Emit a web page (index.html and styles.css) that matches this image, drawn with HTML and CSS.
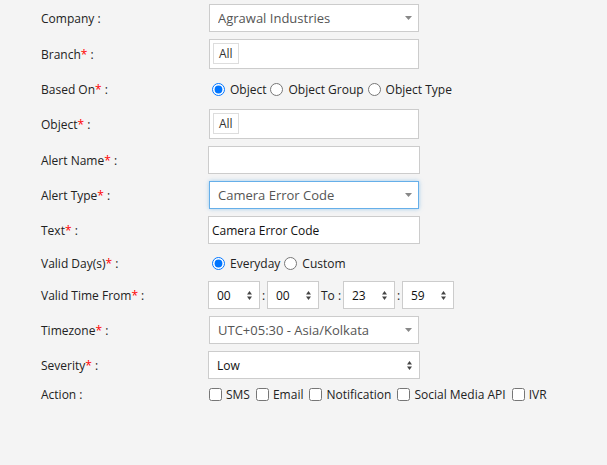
FILE: index.html
```html
<!DOCTYPE html>
<html lang="en">
<head>
    <meta charset="UTF-8">
    <meta name="viewport" content="width=device-width, initial-scale=1.0">
    <title>Add Alert</title>
    <link rel="stylesheet" href="styles.css">
</head>
<body>
    <form class="alert-form">
        <div class="form-row">
            <label class="form-label">Company :</label>
            <div class="select-wrap select-wide">
                <select class="form-select"><option>Agrawal Industries</option></select>
                <svg class="caret" width="7" height="4" viewBox="0 0 7 4"><polygon points="0,0 7,0 3.5,4"/></svg>
            </div>
        </div>

        <div class="form-row">
            <label class="form-label">Branch<span class="req">*</span> :</label>
            <div class="tag-box"><span class="tag">All</span></div>
        </div>

        <div class="form-row row-choice">
            <label class="form-label">Based On<span class="req">*</span> :</label>
            <div class="choice-group">
                <label class="choice"><input type="radio" name="basedOn" checked>Object</label>
                <label class="choice"><input type="radio" name="basedOn">Object Group</label>
                <label class="choice"><input type="radio" name="basedOn">Object Type</label>
            </div>
        </div>

        <div class="form-row">
            <label class="form-label">Object<span class="req">*</span> :</label>
            <div class="tag-box"><span class="tag">All</span></div>
        </div>

        <div class="form-row">
            <label class="form-label">Alert Name<span class="req">*</span> :</label>
            <input type="text" class="form-input">
        </div>

        <div class="form-row">
            <label class="form-label">Alert Type<span class="req">*</span> :</label>
            <div class="select-wrap select-wide is-focus">
                <select class="form-select"><option>Camera Error Code</option></select>
                <svg class="caret" width="7" height="4" viewBox="0 0 7 4"><polygon points="0,0 7,0 3.5,4"/></svg>
            </div>
        </div>

        <div class="form-row">
            <label class="form-label">Text<span class="req">*</span> :</label>
            <input type="text" class="form-input" value="Camera Error Code">
        </div>

        <div class="form-row row-days">
            <label class="form-label">Valid Day(s)<span class="req">*</span> :</label>
            <div class="choice-group">
                <label class="choice"><input type="radio" name="days" checked>Everyday</label>
                <label class="choice"><input type="radio" name="days">Custom</label>
            </div>
        </div>

        <div class="form-row">
            <label class="form-label">Valid Time From<span class="req">*</span> :</label>
            <div class="time-group">
                <div class="select-wrap select-time">
                    <select class="form-select native"><option>00</option></select>
                    <svg class="updown" width="5" height="9" viewBox="0 0 5 9"><polygon points="2.5,0 5,3.5 0,3.5"/><polygon points="0,5.5 5,5.5 2.5,9"/></svg>
                </div>
                <span class="time-sep">:</span>
                <div class="select-wrap select-time">
                    <select class="form-select native"><option>00</option></select>
                    <svg class="updown" width="5" height="9" viewBox="0 0 5 9"><polygon points="2.5,0 5,3.5 0,3.5"/><polygon points="0,5.5 5,5.5 2.5,9"/></svg>
                </div>
                <span class="time-to">To :</span>
                <div class="select-wrap select-time">
                    <select class="form-select native"><option>23</option></select>
                    <svg class="updown" width="5" height="9" viewBox="0 0 5 9"><polygon points="2.5,0 5,3.5 0,3.5"/><polygon points="0,5.5 5,5.5 2.5,9"/></svg>
                </div>
                <span class="time-sep">:</span>
                <div class="select-wrap select-time">
                    <select class="form-select native"><option>59</option></select>
                    <svg class="updown" width="5" height="9" viewBox="0 0 5 9"><polygon points="2.5,0 5,3.5 0,3.5"/><polygon points="0,5.5 5,5.5 2.5,9"/></svg>
                </div>
            </div>
        </div>

        <div class="form-row">
            <label class="form-label">Timezone<span class="req">*</span> :</label>
            <div class="select-wrap select-wide">
                <select class="form-select"><option>UTC+05:30 - Asia/Kolkata</option></select>
                <svg class="caret" width="7" height="4" viewBox="0 0 7 4"><polygon points="0,0 7,0 3.5,4"/></svg>
            </div>
        </div>

        <div class="form-row">
            <label class="form-label">Severity<span class="req">*</span> :</label>
            <div class="select-wrap select-severity">
                <select class="form-select native"><option>Low</option></select>
                <svg class="updown" width="5" height="9" viewBox="0 0 5 9"><polygon points="2.5,0 5,3.5 0,3.5"/><polygon points="0,5.5 5,5.5 2.5,9"/></svg>
            </div>
        </div>

        <div class="form-row row-action">
            <label class="form-label">Action :</label>
            <div class="choice-group">
                <label class="check"><input type="checkbox">SMS</label>
                <label class="check"><input type="checkbox">Email</label>
                <label class="check"><input type="checkbox">Notification</label>
                <label class="check"><input type="checkbox">Social Media API</label>
                <label class="check"><input type="checkbox">IVR</label>
            </div>
        </div>
    </form>
</body>
</html>
```

FILE: styles.css
```css
body {
    font-family: 'Open Sans', 'Liberation Sans', sans-serif;
    font-size: 12px;
    color: #333;
    margin: 0;
    background-color: #f4f4f4;
}
.alert-form {
    padding: 4px 0 0 41px;
    display: flex;
    flex-direction: column;
    gap: 7px;
}
.form-row {
    display: flex;
    align-items: center;
}
.form-label {
    width: 167px;
    flex-shrink: 0;
    color: #222;
}
.req {
    color: #f00;
}

/* selects */
.select-wrap {
    position: relative;
    height: 28px;
}
.select-wide {
    width: 210px;
    margin-left: 1px;
}
.select-severity {
    width: 212px;
}
.select-time {
    width: 52px;
}
.form-select {
    appearance: none;
    -webkit-appearance: none;
    width: 100%;
    height: 100%;
    box-sizing: border-box;
    border: 1px solid #ccc;
    border-radius: 0;
    background-color: #fff;
    font-family: inherit;
    font-size: 13px;
    color: #555;
    padding: 0 20px 0 8px;
    outline: none;
}
.form-select.native {
    font-size: 12px;
    color: #111;
}
.is-focus .form-select {
    border-color: #66afe9;
    box-shadow: 0 0 4px rgba(102, 175, 233, 0.6);
}
.caret {
    position: absolute;
    right: 7px;
    top: 12px;
    fill: #888;
}
.updown {
    position: absolute;
    right: 8px;
    top: 10px;
    fill: #444;
}

/* tag inputs */
.tag-box {
    width: 210px;
    height: 30px;
    margin-left: 1px;
    box-sizing: border-box;
    border: 1px solid #ccc;
    background-color: #fff;
    padding: 3px;
}
.tag {
    display: inline-block;
    height: 21px;
    line-height: 19px;
    box-sizing: border-box;
    border: 1px solid #ddd;
    padding: 0 5px;
    color: #333;
}

/* text inputs */
.form-input {
    width: 212px;
    height: 28px;
    box-sizing: border-box;
    border: 1px solid #ccc;
    background-color: #fff;
    font-family: inherit;
    font-size: 12px;
    color: #111;
    padding: 0 3px;
    margin: 0;
    outline: none;
}

/* radios and checkboxes */
.row-choice {
    height: 26px;
}
.row-days {
    height: 24px;
    margin-bottom: -1px;
}
.row-action {
    height: 16px;
}
.choice-group {
    display: flex;
    align-items: center;
}
.choice {
    display: flex;
    align-items: center;
    margin-right: 4px;
    color: #222;
}
.choice input {
    width: 13px;
    height: 13px;
    margin: 0 5px 0 4px;
}
.choice + .choice input {
    margin-left: 0;
}
.check {
    display: flex;
    align-items: center;
    margin-right: 6px;
    color: #222;
}
.check input {
    width: 13px;
    height: 13px;
    margin: 0 4px 0 1px;
}
.check + .check input {
    margin-left: 0;
}

/* time pickers */
.time-group {
    display: flex;
    align-items: center;
}
.time-sep {
    width: 7px;
    text-align: center;
    color: #222;
}
.time-to {
    width: 24px;
    text-align: center;
    color: #222;
}
```
